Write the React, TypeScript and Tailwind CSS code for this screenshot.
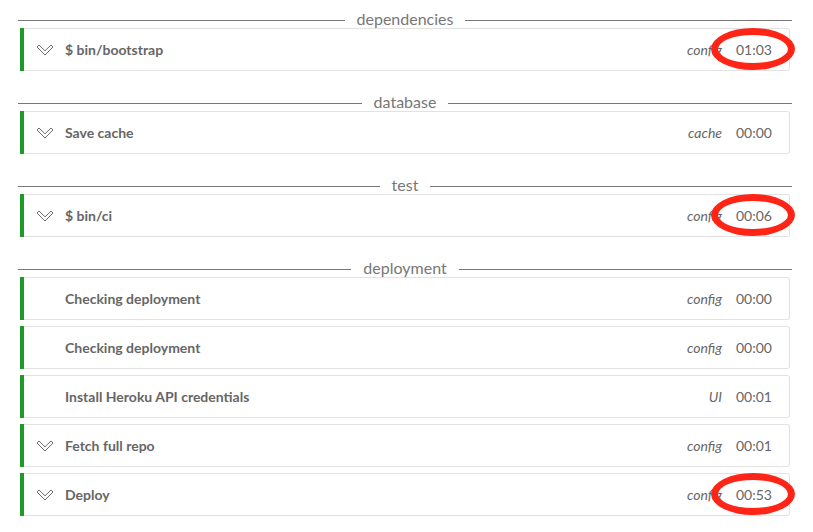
import React from 'react'

type Step = {
  title: string
  tag: string
  time: string
  chevron?: boolean
  circled?: boolean
}

type Section = {
  name: string
  steps: Step[]
}

const sections: Section[] = [
  {
    name: 'dependencies',
    steps: [{ title: '$ bin/bootstrap', tag: 'config', time: '01:03', chevron: true, circled: true }],
  },
  {
    name: 'database',
    steps: [{ title: 'Save cache', tag: 'cache', time: '00:00', chevron: true }],
  },
  {
    name: 'test',
    steps: [{ title: '$ bin/ci', tag: 'config', time: '00:06', chevron: true, circled: true }],
  },
  {
    name: 'deployment',
    steps: [
      { title: 'Checking deployment', tag: 'config', time: '00:00' },
      { title: 'Checking deployment', tag: 'config', time: '00:00' },
      { title: 'Install Heroku API credentials', tag: 'UI', time: '00:01' },
      { title: 'Fetch full repo', tag: 'config', time: '00:01', chevron: true },
      { title: 'Deploy', tag: 'config', time: '00:53', chevron: true, circled: true },
    ],
  },
]

function Chevron() {
  return (
    <svg width="18" height="12" viewBox="0 0 18 12" className="shrink-0">
      <path
        d="M1 3 L3 1 L9 6.8 L15 1 L17 3 L9 11 Z"
        fill="none"
        stroke="#6f6f6f"
        strokeWidth="1"
        strokeLinejoin="round"
      />
    </svg>
  )
}

function StepRow({ step }: { step: Step }) {
  return (
    <div className="relative flex h-[43px] items-center rounded-r-[3px] border border-l-0 border-[#e2e2e2] bg-white">
      <div className="h-[43px] w-[4px] -my-px self-stretch bg-[#1e9a28]" />
      <div className="flex w-[41px] shrink-0 justify-end pr-[11px]">
        {step.chevron && <Chevron />}
      </div>
      <div className="flex-1 text-[14px] font-bold text-[#666]">{step.title}</div>
      <div className="text-[14px] italic text-[#666]">{step.tag}</div>
      <div className="w-[37px] ml-[14px] mr-[16px] text-[14px] text-[#666]">{step.time}</div>
      {step.circled && (
        <div className="pointer-events-none absolute right-[-6px] top-[-1px] h-[42px] w-[84px] rounded-[50%] border-[7px] border-[#ff2516]" />
      )}
    </div>
  )
}

export default function App() {
  return (
    <div
      className="h-[532px] w-[813px] bg-white px-[18px] pt-[12px]"
      style={{ fontFamily: 'Lato, "Open Sans", sans-serif' }}
    >
      <div className="w-[774px] flex flex-col gap-[24px]">
        {sections.map((section) => (
          <div key={section.name}>
            <div className="flex h-[16px] items-center gap-[12px]">
              <div className="h-px flex-1 bg-[#777]" />
              <div className="-mt-[3px] text-[16px] leading-[16px] text-[#777]">{section.name}</div>
              <div className="h-px flex-1 bg-[#777]" />
            </div>
            <div className="mx-[2px] flex flex-col gap-[6px]">
              {section.steps.map((step, i) => (
                <StepRow key={i} step={step} />
              ))}
            </div>
          </div>
        ))}
      </div>
    </div>
  )
}
